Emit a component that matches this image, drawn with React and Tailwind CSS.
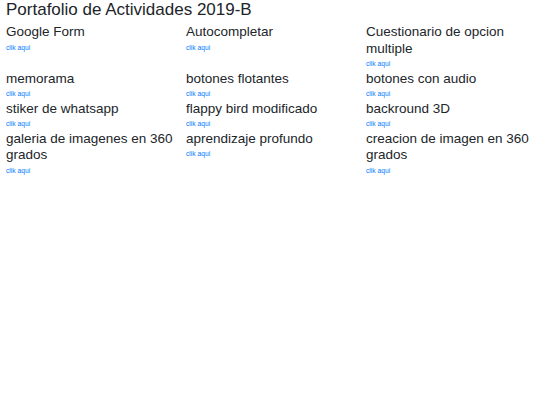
const items = [
  "Google Form",
  "Autocompletar",
  "Cuestionario de opcion multiple",
  "memorama",
  "botones flotantes",
  "botones con audio",
  "stiker de whatsapp",
  "flappy bird modificado",
  "backround 3D",
  "galeria de imagenes en 360 grados",
  "aprendizaje profundo",
  "creacion de imagen en 360 grados",
];

export default function App() {
  return (
    <div
      className="min-h-[405px] w-[540px] bg-white text-[#212529]"
      style={{ fontFamily: '"Liberation Sans", Arial, sans-serif' }}
    >
      <h1 className="px-[6px] text-[17px] leading-[20.4px] font-normal mb-[4px]">
        Portafolio de Actividades 2019-B
      </h1>
      <div className="grid grid-cols-3">
        {items.map((name) => (
          <div key={name} className="px-[6px]">
            <h4 className="text-[13.5px] leading-[16.5px] font-normal">{name}</h4>
            <div className="text-[6.7px] leading-[13.5px]">
              <a href="#" className="text-[#007bff]">
                clik aqui
              </a>
            </div>
          </div>
        ))}
      </div>
    </div>
  );
}
